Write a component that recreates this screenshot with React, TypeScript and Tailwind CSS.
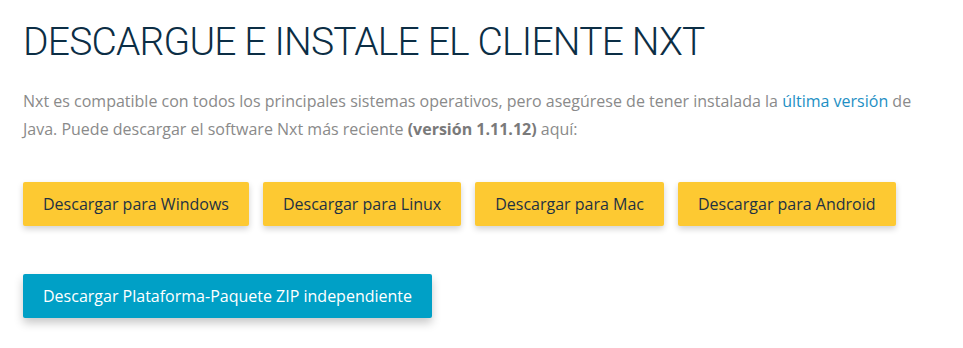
import React from 'react';

const platforms = ['Windows', 'Linux', 'Mac', 'Android'];

export default function App() {
  return (
    <div className="w-[963px] h-[348px] bg-white px-[23px] pt-[20px]" style={{ fontFamily: '"Open Sans", sans-serif' }}>
      <h1 className="text-[39px] leading-[44px] font-light tracking-[-0.8px] text-[#0c2e45]" style={{ fontFamily: 'Roboto, "Open Sans", sans-serif' }}>
        DESCARGUE E INSTALE EL CLIENTE NXT
      </h1>
      <p className="mt-[23px] text-[16px] leading-[28px] text-[#8a8a8a] max-w-[900px]">
        Nxt es compatible con todos los principales sistemas operativos, pero asegúrese de tener instalada la{' '}
        <a href="#" className="text-[#1d8fc4]">última versión</a> de Java. Puede descargar el software Nxt más reciente{' '}
        <strong className="font-bold text-[#7a7a7a]">(versión 1.11.12)</strong> aquí:
      </p>
      <div className="mt-[39px] flex gap-[14px]">
        {platforms.map((p) => (
          <a
            key={p}
            href="#"
            className="h-[44px] px-[20px] flex items-center rounded-[2px] bg-[#fdc932] text-[16px] text-[#1f3242] shadow-[0_3px_6px_rgba(0,0,0,0.18)]"
          >
            Descargar para {p}
          </a>
        ))}
      </div>
      <div className="mt-[48px] flex">
        <a
          href="#"
          className="h-[44px] px-[20px] flex items-center rounded-[2px] bg-[#00a0c6] text-[16px] text-white shadow-[0_5px_10px_rgba(0,0,0,0.22)]"
        >
          Descargar Plataforma-Paquete ZIP independiente
        </a>
      </div>
    </div>
  );
}
